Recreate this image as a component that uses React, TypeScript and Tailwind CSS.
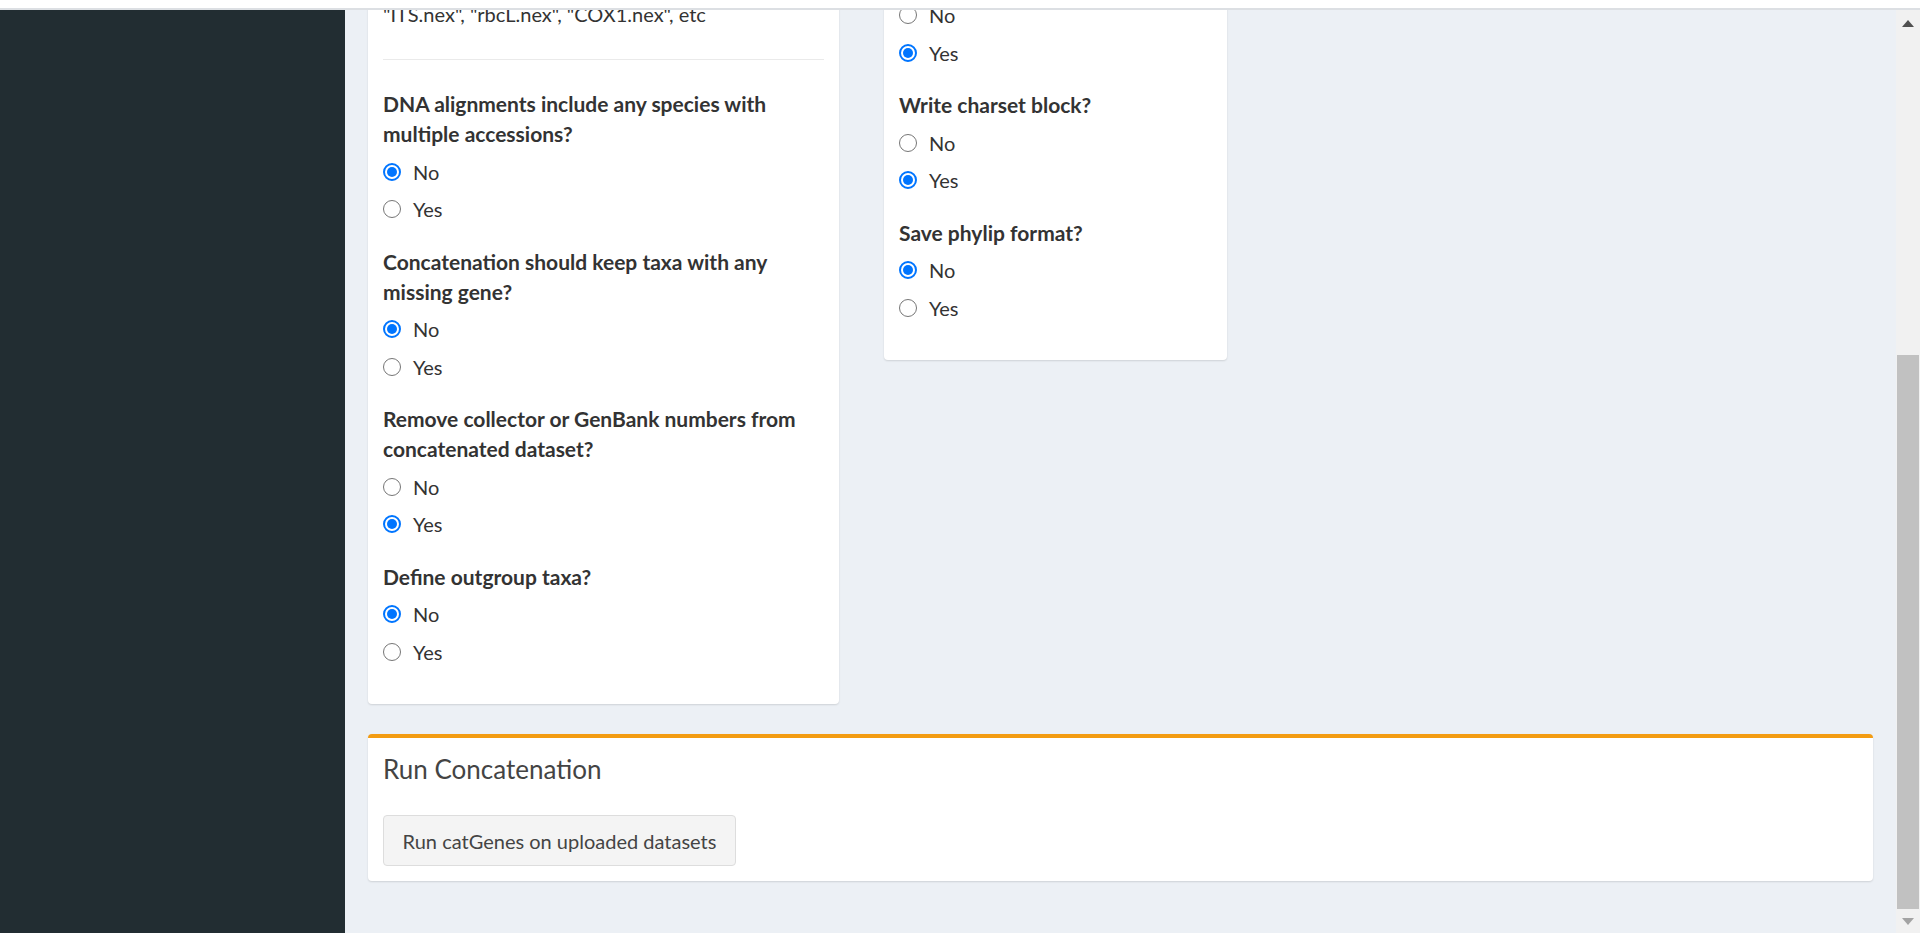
import React from 'react';

type Field = {
  label: string;
  value: 'No' | 'Yes';
};

const LEFT_FIELDS: Field[] = [
  { label: 'DNA alignments include any species with multiple accessions?', value: 'No' },
  { label: 'Concatenation should keep taxa with any missing gene?', value: 'No' },
  { label: 'Remove collector or GenBank numbers from concatenated dataset?', value: 'Yes' },
  { label: 'Define outgroup taxa?', value: 'No' },
];

const RIGHT_FIELDS: Field[] = [
  { label: 'Write charset block?', value: 'Yes' },
  { label: 'Save phylip format?', value: 'No' },
];

function Radio({ label, checked }: { label: string; checked: boolean }) {
  return (
    <div className="flex items-center h-[30px]">
      {checked ? (
        <span className="flex items-center justify-center w-[18px] h-[18px] rounded-full border-[2px] border-[#0075ff] bg-white">
          <span className="w-[10px] h-[10px] rounded-full bg-[#0075ff]" />
        </span>
      ) : (
        <span className="w-[18px] h-[18px] rounded-full border border-[#767676] bg-white" />
      )}
      <span className="ml-[12px]">{label}</span>
    </div>
  );
}

function RadioGroup({ value }: { value: 'No' | 'Yes' }) {
  return (
    <div className="flex flex-col gap-[7.5px]">
      <Radio label="No" checked={value === 'No'} />
      <Radio label="Yes" checked={value === 'Yes'} />
    </div>
  );
}

function FormField({ field }: { field: Field }) {
  return (
    <div className="mb-[22.5px]">
      <div className="font-bold text-[21px] mb-[7.5px]">{field.label}</div>
      <RadioGroup value={field.value} />
    </div>
  );
}

export default function App() {
  return (
    <div className="relative h-[933px] overflow-hidden flex bg-[#ecf0f5] text-[#333] text-[20px] leading-[30px] font-['Lato','Liberation_Sans',sans-serif]">
      {/* browser chrome edge */}
      <div className="absolute top-0 left-0 right-0 z-10">
        <div className="h-[8px] bg-white" />
        <div className="h-[2px] bg-[#dcdfe3]" />
      </div>

      {/* sidebar */}
      <aside className="w-[345px] shrink-0 bg-[#222d32]" />

      {/* content */}
      <main className="flex-1 px-[23px]">
        <div className="flex gap-[45px] items-start">
          {/* left box (scrolled) */}
          <div className="w-[471px] bg-white rounded-b-[4px] shadow-[0_1px_2px_rgba(0,0,0,0.13)] px-[15px] pb-[15px]">
            <div className="-mt-[1px]">"ITS.nex", "rbcL.nex", "COX1.nex", etc</div>
            <hr className="mt-[30px] mb-[29px] border-t border-[#eaeaea]" />
            {LEFT_FIELDS.map((f) => (
              <FormField key={f.label} field={f} />
            ))}
          </div>

          {/* right box (scrolled) */}
          <div className="w-[343px] bg-white rounded-b-[4px] shadow-[0_1px_2px_rgba(0,0,0,0.13)] px-[15px] pb-[15px]">
            <div className="mb-[22.5px]">
              <RadioGroup value="Yes" />
            </div>
            {RIGHT_FIELDS.map((f) => (
              <FormField key={f.label} field={f} />
            ))}
          </div>
        </div>

        {/* run box */}
        <div className="mt-[30px] bg-white rounded-[4px] border-t-[4px] border-[#f39c12] shadow-[0_1px_2px_rgba(0,0,0,0.13)]">
          <div className="px-[15px] py-[15px]">
            <h3 className="text-[26px] leading-[32px] text-[#444]">Run Concatenation</h3>
          </div>
          <div className="px-[15px] py-[15px]">
            <button className="w-[353px] h-[51px] bg-[#f4f4f4] border border-[#ddd] rounded-[4px] text-[#444] text-[20px] whitespace-nowrap">
              Run catGenes on uploaded datasets
            </button>
          </div>
        </div>
      </main>

      {/* scrollbar */}
      <div className="w-[24px] shrink-0 bg-[#f1f1f1] flex flex-col pt-[10px]">
        <div className="h-[26px] flex items-center justify-center">
          <svg width="12" height="7" viewBox="0 0 12 7"><path d="M0 7 L6 0 L12 7 Z" fill="#505050" /></svg>
        </div>
        <div className="flex-1 flex flex-col px-[1px]">
          <div className="h-[319px]" />
          <div className="h-[554px] bg-[#c1c1c1]" />
        </div>
        <div className="h-[24px] flex items-center justify-center">
          <svg width="12" height="7" viewBox="0 0 12 7"><path d="M0 0 L12 0 L6 7 Z" fill="#a3a3a3" /></svg>
        </div>
      </div>
    </div>
  );
}
